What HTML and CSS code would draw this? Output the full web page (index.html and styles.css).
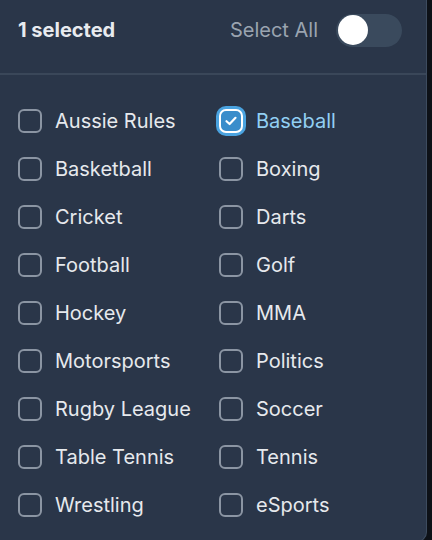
FILE: index.html
```html
<!DOCTYPE html>
<html lang="en">
<head>
    <meta charset="UTF-8">
    <meta name="viewport" content="width=device-width, initial-scale=1.0">
    <title>Sports Filter</title>
    <link rel="stylesheet" href="styles.css">
</head>
<body>
    <div class="panel">
        <div class="header">
            <span class="count">1 selected</span>
            <div class="select-all">
                <span>Select All</span>
                <div class="toggle"><div class="knob"></div></div>
            </div>
        </div>
        <div class="divider"></div>
        <div class="grid">
            <label class="item"><span class="box"></span>Aussie Rules</label>
            <label class="item checked"><span class="box">
                <svg width="14" height="14" viewBox="0 0 14 14"><path d="M2.5 7.2 L5.6 10 L11.5 3.8" fill="none" stroke="#fff" stroke-width="2.2" stroke-linecap="round" stroke-linejoin="round"/></svg>
            </span>Baseball</label>
            <label class="item"><span class="box"></span>Basketball</label>
            <label class="item"><span class="box"></span>Boxing</label>
            <label class="item"><span class="box"></span>Cricket</label>
            <label class="item"><span class="box"></span>Darts</label>
            <label class="item"><span class="box"></span>Football</label>
            <label class="item"><span class="box"></span>Golf</label>
            <label class="item"><span class="box"></span>Hockey</label>
            <label class="item"><span class="box"></span>MMA</label>
            <label class="item"><span class="box"></span>Motorsports</label>
            <label class="item"><span class="box"></span>Politics</label>
            <label class="item"><span class="box"></span>Rugby League</label>
            <label class="item"><span class="box"></span>Soccer</label>
            <label class="item"><span class="box"></span>Table Tennis</label>
            <label class="item"><span class="box"></span>Tennis</label>
            <label class="item"><span class="box"></span>Wrestling</label>
            <label class="item"><span class="box"></span>eSports</label>
        </div>
    </div>
</body>
</html>
```

FILE: styles.css
```css
body {
    margin: 0;
    background-color: #0d1117;
    font-family: Inter, "Noto Sans", sans-serif;
    overflow: hidden;
    height: 540px;
}
.panel {
    width: 426px;
    height: 541px;
    background-color: #2a3649;
    border-right: 1px solid #3d4b5e;
    border-bottom: 1px solid #3d4b5e;
    border-bottom-right-radius: 10px;
}
.header {
    display: flex;
    justify-content: space-between;
    align-items: center;
    height: 60px;
    padding: 0 24px 0 18px;
    box-sizing: border-box;
}
.count {
    color: #e8ebef;
    font-size: 20px;
    font-weight: 700;
}
.select-all {
    display: flex;
    align-items: center;
    gap: 18px;
    color: #9aa4b0;
    font-size: 20px;
}
.toggle {
    width: 66px;
    height: 33px;
    border-radius: 17px;
    background-color: #3a4a5d;
    display: flex;
    align-items: center;
    padding: 0 2px;
    box-sizing: border-box;
}
.knob {
    width: 30px;
    height: 30px;
    border-radius: 50%;
    background-color: #fff;
}
.divider {
    height: 2px;
    margin-top: 13px;
    background-color: #3a4759;
}
.grid {
    display: grid;
    grid-template-columns: 201px 1fr;
    grid-auto-rows: 48px;
    padding: 22px 0 0 18px;
}
.item {
    display: flex;
    align-items: center;
    gap: 13px;
    color: #e6e9ed;
    font-size: 20px;
}
.box {
    width: 24px;
    height: 24px;
    box-sizing: border-box;
    border: 2px solid #8b95a3;
    border-radius: 6px;
    display: flex;
    align-items: center;
    justify-content: center;
}
.checked {
    color: #92cff3;
}
.checked .box {
    border-color: #fff;
    background-color: #3a8dcb;
    box-shadow: 0 0 0 3px #4aa3e0;
    border-radius: 7px;
}
```
